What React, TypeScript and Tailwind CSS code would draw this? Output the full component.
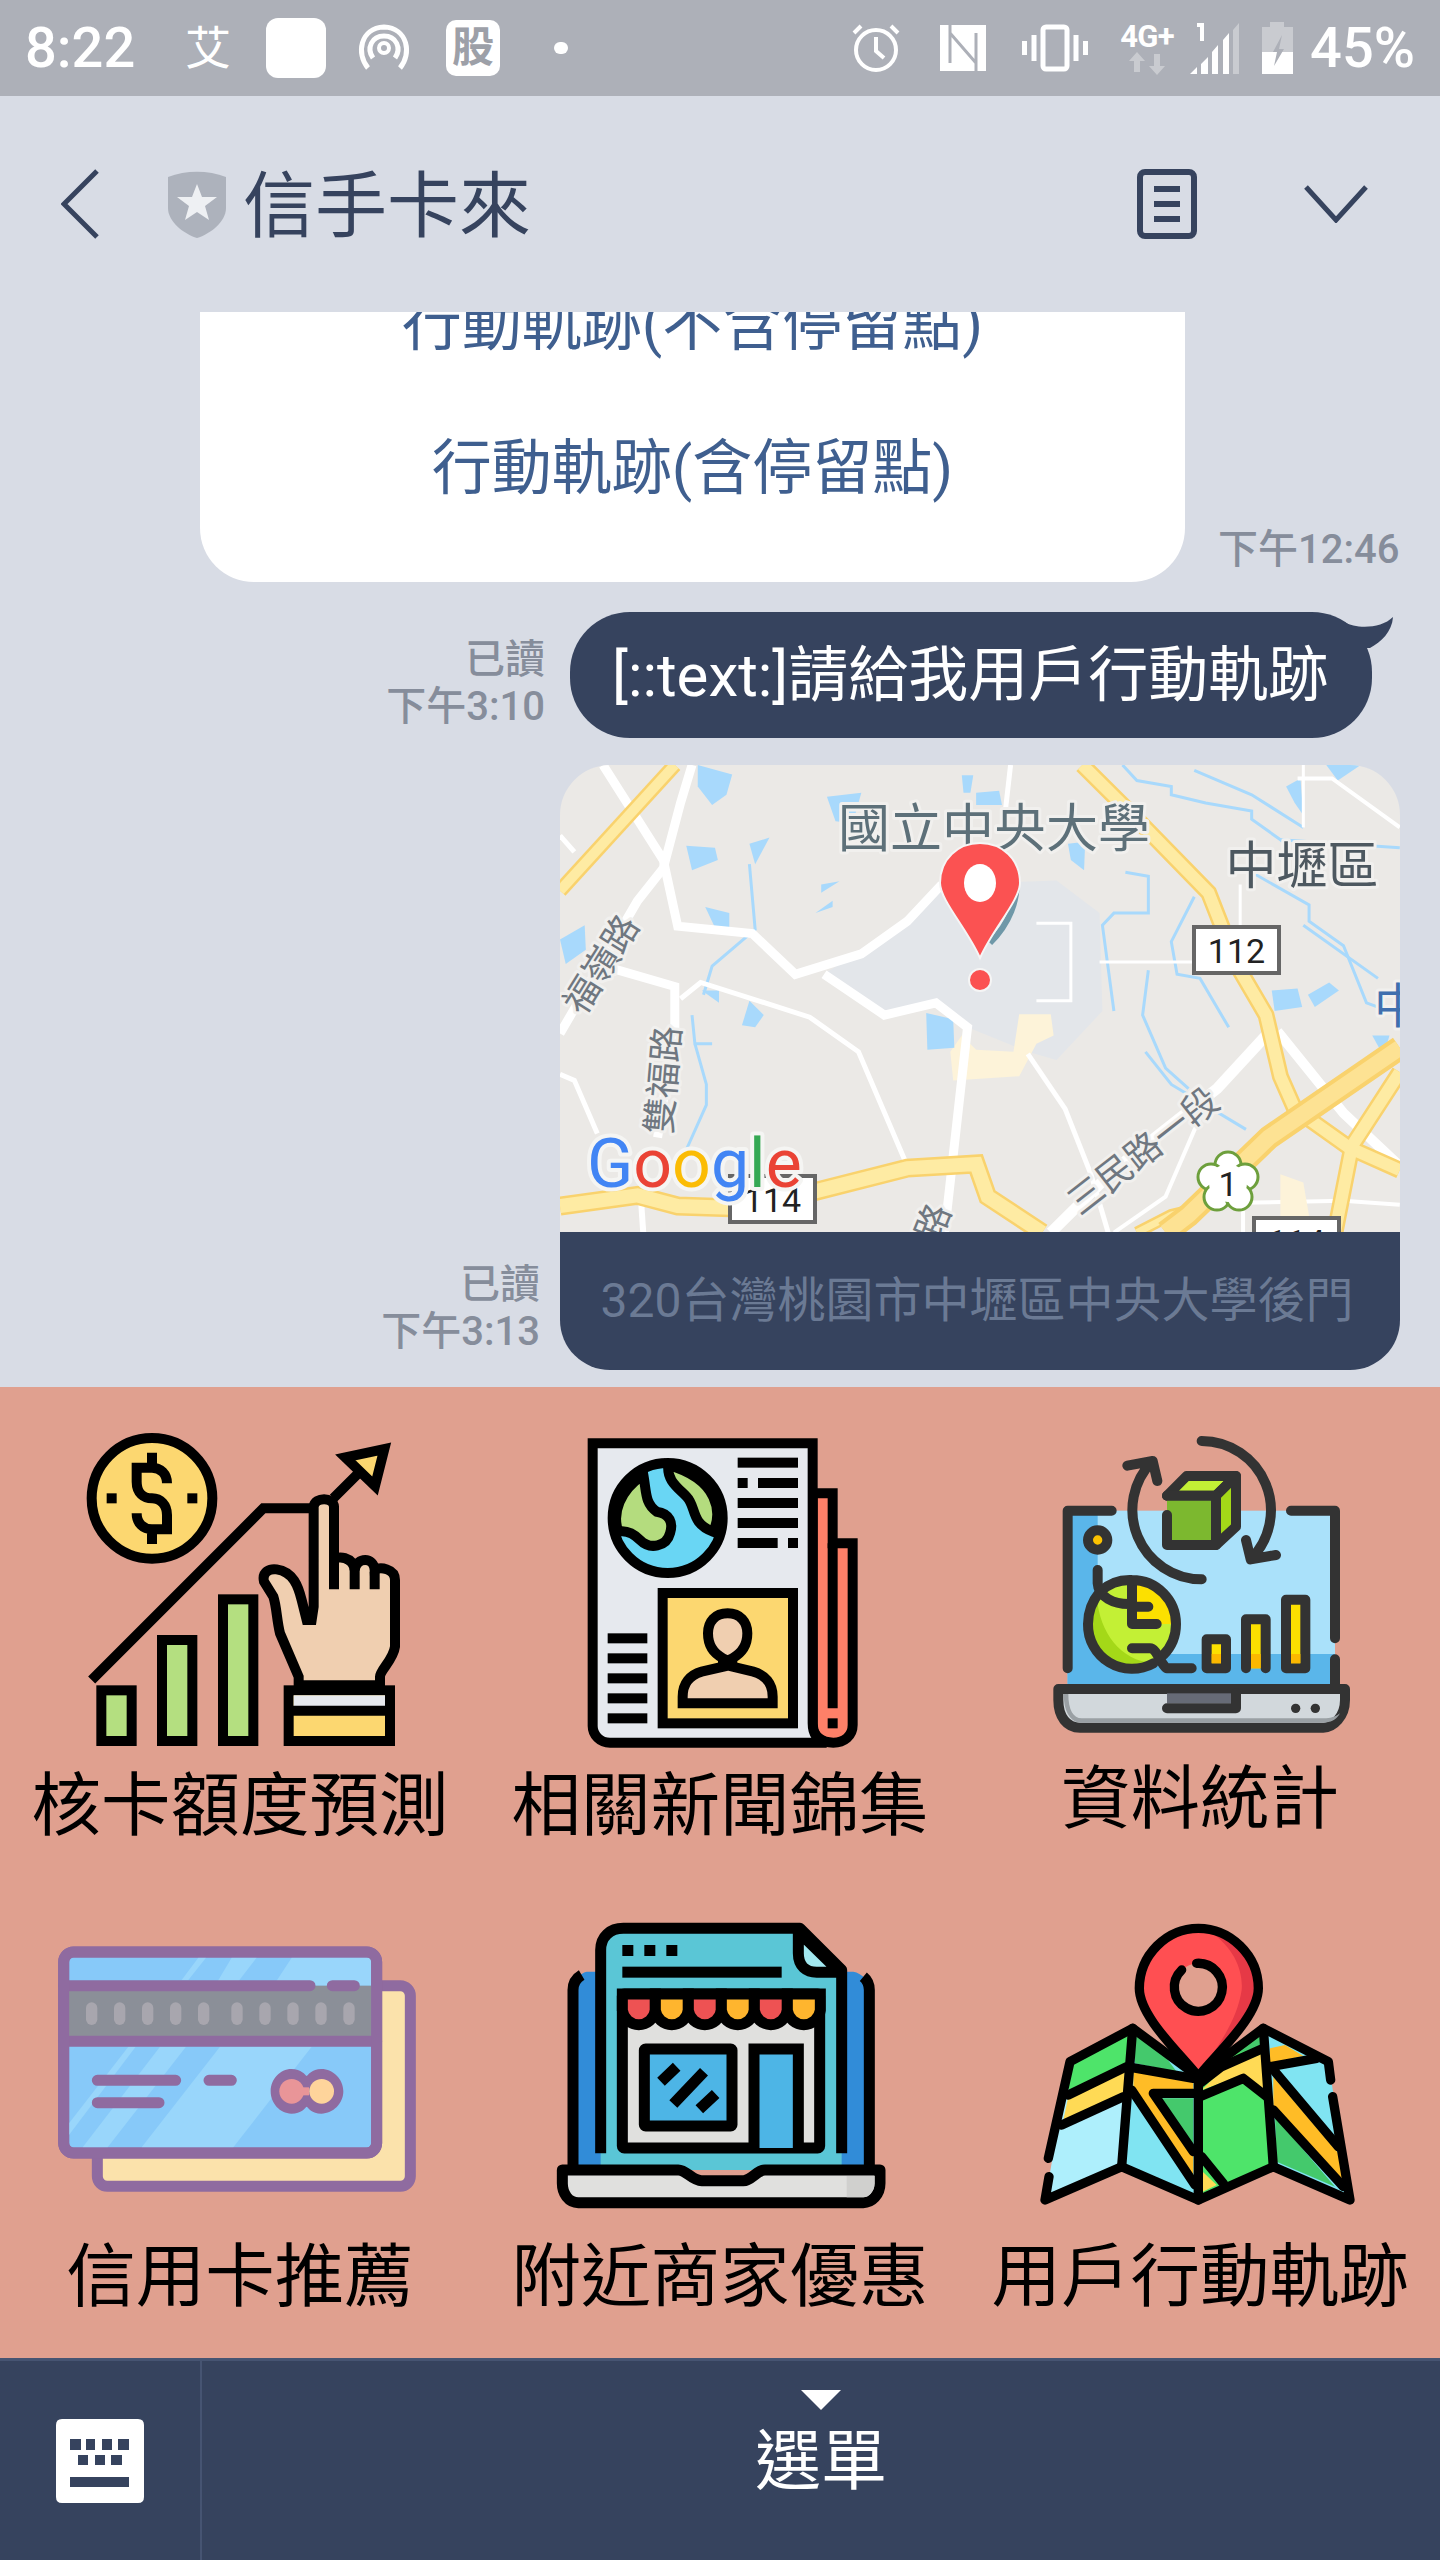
import React from 'react';

const navy = '#36435e';

// ---- map data, drawn in the stretched coordinates of the crop ----
const yellowRoads: [string, number][] = [
  ['M35 345 L235 37', 11],
  ['M945 37 L1040 170 L1165 350 L1215 530 L1265 650 L1290 800 L1315 880 L1410 975 L1498 1030', 13],
  ['M1498 790 L1415 970 L1385 1183', 13],
  ['M35 1118 L170 1092 L240 1118 L330 1122 L480 1082 L640 1025 L760 1015 L780 1095 L875 1183', 15],
  ['M1040 1183 L1100 1140 L1130 1130', 8],
];
const whiteRoads: [string, number][] = [
  ['M110 37 L215 270 L240 432 L370 450 L445 550 L560 500 L640 420 L700 330', 9],
  ['M265 37 L245 130 L215 290 L170 370 L35 695', 9],
  ['M100 525 L235 580 L235 680 L205 950', 9],
  ['M35 795 L60 810 L100 940', 5],
  ['M245 610 L280 570 L470 655 L555 740 L640 1020', 5],
  ['M495 550 L600 650 L690 620 L745 680 L705 1183', 9],
  ['M820 37 L810 160', 5],
  ['M850 745 L915 880 L960 1040 L990 1183', 5],
  ['M890 1183 L1000 1030 L1180 830 L1265 700', 11],
  ['M1285 690 L1400 890 L1498 1020', 10],
  ['M1000 1183 L1090 1095 L1150 900', 4],
  ['M865 425 L925 425 L925 615 L865 615', 3],
  ['M975 520 L1140 520', 3],
  ['M1220 330 L1220 440', 3],
  ['M1330 37 L1330 190', 3],
  ['M1320 70 L1380 70 L1498 190', 4],
  ['M1225 1183 L1225 1110 L1400 1105 L1498 1115', 4],
  ['M175 1080 L180 1183', 6],
  ['M35 210 L60 250', 5],
];
const waterLines = [
  'M1015 37 L1040 75 L1100 90 L1100 110 L1160 130 L1240 150 L1240 170 L1300 230',
  'M1140 50 L1240 110 L1330 190',
  'M1240 300 L1340 380 L1340 420 L1400 480 L1440 620 L1498 650',
  'M1330 430 L1460 560',
  'M1020 300 L1060 310 L1060 400 L1000 400 L980 430 L1000 640',
  'M1140 360 L1100 470 L1110 550 L1150 560 L1200 680',
  'M1060 540 L1050 650 L1090 780 L1130 830',
  'M1055 740 L1100 820 L1230 930',
  'M365 280 L375 440 L300 530 L285 600',
  'M265 650 L270 720 L300 720 M270 720 L290 820 L290 870 L255 980',
  'M1290 220 L1498 240',
];
const waterBlobs = [
  'M275 37 L335 60 L325 110 L300 135 L275 90 Z',
  'M255 235 L305 240 L310 270 L265 295 Z',
  'M365 230 L400 215 L375 280 Z',
  'M35 465 L78 430 L80 490 L45 525 Z',
  'M288 385 L330 400 L330 435 L305 435 Z',
  'M490 330 L522 322 L490 350 Z',
  'M480 400 L510 370 L510 385 Z',
  'M282 590 L312 590 L312 620 Z',
  'M365 615 L390 650 L375 680 L352 675 Z',
  'M673 645 L720 660 L722 730 L675 735 Z',
  'M920 230 L950 225 L948 295 L925 270 Z',
  'M1275 590 L1320 585 L1328 630 L1280 640 Z',
  'M1338 600 L1375 570 L1392 590 L1350 630 Z',
  'M735 62 L755 62 L750 105 L738 105 Z',
  'M500 115 L560 105 L545 180 L515 175 Z',
  'M760 105 L800 100 L805 135 L760 135 Z',
  'M1300 90 L1325 70 L1330 160 L1315 130 Z',
  'M1370 37 L1430 37 L1390 75 Z',
  'M1450 700 L1480 700 L1470 750 Z',
];

function MapLabel({ x, y, size, rotate, fill, children }: { x: number; y: number; size: number; rotate?: number; fill: string; children: React.ReactNode }) {
  return (
    <text x={x} y={y} fontSize={size} fill={fill} stroke="#f1f0ee" strokeWidth={6} strokeLinejoin="round" textAnchor="middle" transform={rotate ? `rotate(${rotate} ${x} ${y})` : undefined} style={{ paintOrder: 'stroke' }}>
      {children}
    </text>
  );
}

function RoadShield({ x, y, label }: { x: number; y: number; label: string }) {
  return (
    <g>
      <rect x={x} y={y} width={85} height={46} fill="#fff" stroke="#666" strokeWidth={4} />
      <text x={x + 42.5} y={y + 36} fontSize={34} fill="#222" textAnchor="middle" fontFamily="Roboto">{label}</text>
    </g>
  );
}

function MapPicture() {
  return (
    <svg width="840" height="467" viewBox="0 0 840 467" className="block">
      <rect width="840" height="467" fill="#ebe9e6" />
      <g transform="translate(-20.09 -15.1) scale(.574 .408)" fill="none">
        <path d="M500 545 L640 420 L700 330 L900 320 L975 400 L980 640 L900 760 L850 740 L745 680 L690 620 L600 650 Z" fill="#e3e6ea" />
        <path d="M835 648 L890 648 L895 700 L865 720 L835 800 L720 810 L715 740 L735 700 L760 735 L825 740 Z" fill="#fdf3d9" />
        {waterBlobs.map((d) => <path key={d} d={d} fill="#a8d9fc" />)}
        {waterLines.map((d) => <path key={d} d={d} stroke="#a8d9fc" strokeWidth={3} vectorEffect="non-scaling-stroke" />)}
        {whiteRoads.map(([d, w]) => <path key={d} d={d} stroke="#fff" strokeWidth={w} vectorEffect="non-scaling-stroke" />)}
        {yellowRoads.map(([d, w]) => <path key={d} d={d} stroke="#f9d26d" strokeWidth={w + 4} vectorEffect="non-scaling-stroke" />)}
        {yellowRoads.map(([d, w]) => <path key={d + 'i'} d={d} stroke="#feeba3" strokeWidth={w - 1} vectorEffect="non-scaling-stroke" />)}
        <path d="M1498 730 L1270 950 L1130 1140 L1090 1183" stroke="#f9d26d" strokeWidth={24} vectorEffect="non-scaling-stroke" />
        <path d="M1498 730 L1270 950 L1130 1140 L1090 1183" stroke="#fde293" strokeWidth={16} vectorEffect="non-scaling-stroke" />
        <path d="M1290 1183 L1290 1040 L1330 1060 L1345 1183 Z" fill="#fdf3d9" />
      </g>

      <MapLabel x={434} y={82} size={52} fill="#5d7079">國立中央大學</MapLabel>
      <MapLabel x={742} y={119} size={51} fill="#4d5860">中壢區</MapLabel>
      <MapLabel x={52} y={206} size={36} rotate={-58} fill="#6f7780">福嶺路</MapLabel>
      <MapLabel x={116} y={316} size={36} rotate={-85} fill="#6f7780">雙福路</MapLabel>
      <MapLabel x={591} y={396} size={36} rotate={-38} fill="#6f7780">三民路一段</MapLabel>
      <MapLabel x={385} y={462} size={36} rotate={-68} fill="#6f7780">路</MapLabel>
      <MapLabel x={838} y={258} size={48} fill="#3f6fae">中</MapLabel>

      <RoadShield x={634} y={162} label="112" />
      <RoadShield x={170} y={411} label="114" />
      <RoadShield x={694} y={453} label="114" />

      <text x={27} y={422} fontSize={68} fontFamily="Roboto" stroke="#f5f5f3" strokeWidth={8} strokeLinejoin="round" style={{ paintOrder: 'stroke' }}>
        <tspan fill="#4285f4">G</tspan>
        <tspan fill="#ea4335">o</tspan>
        <tspan fill="#fbbc05">o</tspan>
        <tspan fill="#4285f4">g</tspan>
        <tspan fill="#34a853">l</tspan>
        <tspan fill="#ea4335">e</tspan>
      </text>

      {/* flower route marker */}
      <g fill="#fff" stroke="#6d9f3c" strokeWidth={3}>
        <circle cx={668} cy={400} r={13} />
        <circle cx={651} cy={412} r={13} />
        <circle cx={685} cy={412} r={13} />
        <circle cx={657} cy={432} r={13} />
        <circle cx={679} cy={432} r={13} />
      </g>
      <circle cx={668} cy={418} r={19} fill="#fff" />
      <text x={668} y={431} fontSize={34} fill="#222" textAnchor="middle" fontFamily="Roboto">1</text>

      {/* pin */}
      <path d="M456 108 C460 135 448 160 430 178" fill="none" stroke="#6f98a8" strokeWidth={6} />
      <path d="M420 193 C408 165 380 135 380 118 C380 94 398 78 420 78 C442 78 460 94 460 118 C460 135 432 165 420 193 Z" fill="#fb5252" stroke="#f5f5f5" strokeWidth={2} />
      <ellipse cx={420} cy={118} rx={16} ry={19} fill="#fff" />
      <circle cx={420} cy={215} r={11} fill="#fb5252" stroke="#f5f5f5" strokeWidth={2} />
    </svg>
  );
}

// ---- rich menu drawings, in 3x crop coordinates ----
function IconLimit() {
  return (
    <svg width="480" height="350" viewBox="0 0 1440 1050" className="block" fill="none" stroke="#000" strokeWidth="30">
      <circle cx="456" cy="295" r="181" fill="#fcd770" />
      <path d="M501 250 C501 222 482 203 456 203 H410 V245 C410 280 432 295 456 295 C482 295 501 315 501 345 V388 H456 C430 388 410 370 410 340 M456 158 V203 M456 388 V432" />
      <rect x="320" y="280" width="30" height="30" fill="#000" stroke="none" />
      <rect x="562" y="280" width="30" height="30" fill="#000" stroke="none" />
      <path d="M275 840 L790 325 H945 M1000 295 L1085 210" />
      <path d="M1036 172 L1153 147 L1125 258 Z" fill="#fcd770" />
      <rect x="304" y="871" width="91" height="152" fill="#b4df80" />
      <rect x="486" y="720" width="91" height="303" fill="#b4df80" />
      <rect x="669" y="598" width="91" height="425" fill="#b4df80" />
      <path d="M896 856 V830 L840 700 C830 660 830 620 820 590 L792 545 C785 515 810 505 830 508 C880 515 895 560 905 600 L920 660 H935 L941 620 V320 C945 290 1000 290 1002 320 V480 C1010 465 1060 470 1064 510 C1070 470 1122 470 1124 510 C1140 500 1185 505 1185 540 V740 C1180 780 1140 810 1140 830 V856 Z" fill="#f0cfb0" />
      <path d="M1002 480 V568 M1064 505 V568 M1124 515 V568" />
      <rect x="866" y="871" width="304" height="152" fill="#fcd770" />
      <rect x="881" y="886" width="274" height="32" fill="#e6e9ee" stroke="none" />
      <path d="M866 932 H1170" />
    </svg>
  );
}

function IconNews() {
  return (
    <svg width="480" height="350" viewBox="0 0 1440 1050" className="block" fill="none" stroke="#000" strokeWidth="30">
      <path d="M998 280 H1058 V430 H1118 V975 C1118 1008 1092 1028 1060 1028 C1025 1028 998 1008 998 975 Z" fill="#fe8068" />
      <path d="M1058 430 V925" />
      <rect x="1043" y="955" width="30" height="30" fill="#000" stroke="none" />
      <path d="M338 130 H998 V970 C998 1000 1010 1020 1040 1028 H390 C360 1028 338 1005 338 978 Z" fill="#e6e9ee" />
      <circle cx="563" cy="354" r="165" fill="#69d6f4" />
      <path d="M490 225 C500 280 495 310 530 335 C570 340 580 370 570 400 C560 440 510 450 480 420 C460 400 440 390 415 395 C395 340 420 270 490 225 Z" fill="#b4dc7e" />
      <path d="M565 195 C560 240 590 260 620 290 C650 320 630 370 700 395 C725 340 720 240 565 195 Z" fill="#b4dc7e" />
      <g fill="#000" stroke="none">
        <rect x="773" y="173" width="181" height="30" />
        <rect x="773" y="234" width="30" height="30" />
        <rect x="834" y="234" width="120" height="30" />
        <rect x="773" y="294" width="181" height="30" />
        <rect x="773" y="354" width="181" height="30" />
        <rect x="773" y="414" width="120" height="30" />
        <rect x="924" y="414" width="30" height="30" />
        <rect x="383" y="700" width="119" height="30" />
        <rect x="383" y="760" width="119" height="30" />
        <rect x="383" y="820" width="119" height="30" />
        <rect x="383" y="880" width="119" height="30" />
        <rect x="383" y="940" width="119" height="30" />
      </g>
      <rect x="548" y="579" width="391" height="391" fill="#fcd770" />
      <path d="M608 910 V890 C608 850 630 825 665 815 L729 800 V775 C700 760 684 735 684 700 C684 665 705 640 743 640 C780 640 802 665 802 700 C802 735 785 760 757 775 V800 L820 815 C855 825 878 850 878 890 V910 Z" fill="#f0cfb0" />
    </svg>
  );
}

function IconStats() {
  return (
    <svg width="480" height="350" viewBox="0 0 1440 1050" className="block" fill="none" stroke="#333" strokeWidth="30" strokeLinecap="round" strokeLinejoin="round">
      <rect x="323" y="332" width="802" height="525" fill="#aae1fa" stroke="none" />
      <rect x="323" y="332" width="90" height="525" fill="#5ab6ea" stroke="none" />
      <rect x="323" y="762" width="802" height="95" fill="#5ab6ea" stroke="none" />
      <path d="M323 805 V332 H455 M993 332 H1125 V715 M1125 778 V860" />
      <path d="M295 867 H1155 V900 C1155 950 1120 983 1090 983 H360 C320 983 295 950 295 900 Z" fill="#d2d8dc" />
      <path d="M312 900 C315 945 340 968 360 968 H1090 C1110 968 1130 960 1140 940 C1120 955 1100 955 1090 955 H365 C340 955 325 930 325 882 H312 Z" fill="#9aa0a4" stroke="none" />
      <rect x="621" y="880" width="192" height="30" fill="#676b76" stroke="none" />
      <path d="M621 925 H828 V880" />
      <circle cx="1007" cy="925" r="14" fill="#333" stroke="none" />
      <circle cx="1066" cy="925" r="14" fill="#333" stroke="none" />
      <circle cx="413" cy="420" r="29" fill="#fcc200" />
      <path d="M725 123 A208 208 0 0 1 872 478 M858 420 L872 478 L948 465" />
      <path d="M725 538 A208 208 0 0 1 578 183 M502 197 L578 183 L592 243" />
      <path d="M621 287 L680 228 H828 L768 287 Z" fill="#c3f035" />
      <path d="M768 287 L828 228 V380 L768 435 Z" fill="#a4d818" />
      <path d="M621 345 V435 H768 V287 H621" fill="#7cb82f" />
      <circle cx="516" cy="672" r="132" fill="#c3f035" stroke="none" />
      <path d="M516 540 A132 132 0 0 1 648 672 H516 Z" fill="#fce000" stroke="none" />
      <path d="M410 590 A132 132 0 0 0 580 790 C480 780 420 700 410 590 Z" fill="#a4d818" stroke="none" />
      <path d="M413 510 V550 C415 590 460 615 516 612 M516 550 V672 H590 M530 620 H565 M516 745 H570 C590 745 600 790 620 805 H695" />
      <path d="M420 575 A132 132 0 0 1 516 540 C590 540 648 600 648 672 C648 710 635 740 610 765 M580 790 A132 132 0 0 1 384 672 C384 640 395 605 420 575" />
      <path d="M740 805 V718 H798 V805 Z" fill="#fce000" />
      <path d="M858 805 V658 H917 V805" fill="#fce000" />
      <path d="M978 805 V599 H1036 V805 Z" fill="#fce000" />
      <rect x="755" y="762" width="28" height="28" fill="#fcb800" stroke="none" />
      <rect x="873" y="762" width="29" height="43" fill="#fcb800" stroke="none" />
      <rect x="993" y="762" width="28" height="28" fill="#fcb800" stroke="none" />
    </svg>
  );
}

function IconCard() {
  const pills = [258, 342, 426, 510, 594, 694, 778, 862, 946, 1030];
  return (
    <svg width="480" height="320" viewBox="0 0 1440 960" className="block" fill="none" stroke="#8f6ba0" strokeWidth="33" strokeLinecap="round">
      <rect x="292" y="287" width="939" height="602" rx="30" fill="#fbe2ab" />
      <rect x="191" y="186" width="939" height="603" rx="30" fill="#87c9f9" />
      <g fill="#99d6fb" stroke="none">
        <path d="M660 470 H935 L700 772 H425 Z" />
        <path d="M480 470 H558 L323 772 H248 Z" />
        <path d="M385 470 H407 L207 735 V700 Z" />
        <path d="M875 203 H1113 V287 H820 Z" />
        <path d="M695 203 H770 L705 287 H645 Z" />
        <path d="M595 203 H618 L565 270 H545 Z" />
      </g>
      <rect x="207" y="287" width="907" height="167" fill="#8b8f98" stroke="none" />
      {pills.map((x) => <rect key={x} x={x} y="337" width="34" height="68" rx="17" fill="#a8a6ae" stroke="none" />)}
      <path d="M191 287 H930 M997 287 H1063 M191 454 H1130 M292 571 H527 M627 571 H694 M292 638 H477" />
      <rect x="191" y="186" width="939" height="603" rx="30" />
      <path d="M874 537 C905 537 915 555 920 558 C925 555 935 537 964 537 C1000 537 1030 568 1030 604 C1030 640 1000 671 964 671 C935 671 925 653 920 650 C915 653 905 671 874 671 C840 671 812 640 812 604 C812 568 840 537 874 537 Z" fill="#8f6ba0" stroke="none" />
      <circle cx="875" cy="604" r="37" fill="#e99598" stroke="none" />
      <circle cx="965" cy="604" r="37" fill="#fed49b" stroke="none" />
      <rect x="905" y="592" width="22" height="24" fill="#e99598" stroke="none" />
    </svg>
  );
}

function IconShop() {
  const awnings = [
    [367, '#ee5253'], [466, '#ffb52e'], [565, '#ee5253'], [664, '#ffb52e'], [763, '#ee5253'], [862, '#ffb52e'],
  ] as const;
  return (
    <svg width="480" height="320" viewBox="-60 0 1440 960" className="block" fill="none" stroke="#000" strokeWidth="33">
      <path d="M219 840 V300 C219 270 240 250 260 245 H1060 C1085 250 1108 270 1108 300 V840 Z" fill="#318cd8" stroke="none" />
      <path d="M219 830 V300 C219 280 228 265 245 255 M1108 830 V300 C1108 285 1102 270 1090 260" />
      <path d="M302 840 V180 C302 140 330 115 370 115 H900 L1025 240 V840 Z" fill="#5ac6d6" stroke="none" />
      <path d="M302 790 V180 C302 140 330 115 370 115 H900 L1025 240 V790" strokeLinejoin="round" />
      <path d="M895 125 V190 C895 230 920 247 950 247 H1020 Z" fill="#a2e8f0" strokeLinejoin="round" />
      <g fill="#000" stroke="none">
        <rect x="367" y="165" width="33" height="33" />
        <rect x="433" y="165" width="33" height="33" />
        <rect x="499" y="165" width="33" height="33" />
        <rect x="367" y="230" width="478" height="33" />
      </g>
      <rect x="367" y="312" width="592" height="462" rx="6" fill="#e0e0de" />
      {awnings.map(([x, c]) => (
        <path key={x} d={`M${x} 312 V361 a50 50 0 0 0 99 0 V312 Z`} fill={c} />
      ))}
      <rect x="433" y="477" width="263" height="231" rx="4" fill="#4db5e6" />
      <path d="M520 642 L612 545 M483 575 L530 530 M598 658 L647 612" />
      <path d="M762 774 V477 H895 V774" fill="#4db5e6" />
      <path d="M187 840 H535 C560 840 575 872 605 872 H730 C755 872 770 840 795 840 H1140 V880 C1140 915 1115 938 1090 938 H235 C205 938 187 910 187 880 Z" fill="#e0e0de" strokeLinejoin="round" />
      <path d="M1040 858 H1124 V880 C1124 905 1105 922 1090 922 H1040 Z" fill="#d0d0ce" stroke="none" />
    </svg>
  );
}

function IconRoute() {
  return (
    <svg width="480" height="320" viewBox="-60 0 1440 960" className="block" fill="none" stroke="#000" strokeWidth="28" strokeLinejoin="round" strokeLinecap="round">
      <g stroke="none">
        <path d="M270 515 L458 415 L425 830 L195 930 Z" fill="#aeeffc" />
        <path d="M458 415 L655 560 V930 L425 830 Z" fill="#80e4f2" />
        <path d="M655 560 L850 415 L880 830 L655 930 Z" fill="#4ee46a" />
        <path d="M850 415 L1045 515 L1110 930 L880 830 Z" fill="#80e4f2" />
        <path d="M270 515 L450 425 L440 530 L265 610 Z" fill="#4ee46a" />
        <path d="M265 620 L435 545 L430 620 L250 690 Z" fill="#ffda55" />
        <path d="M465 430 L530 465 L590 545 L465 520 Z" fill="#44c96c" />
        <path d="M460 545 L640 575 V610 L520 605 L640 800 V880 L460 600 Z" fill="#ffbc26" />
        <path d="M545 625 H640 V770 Z" fill="#44c96c" />
        <path d="M885 680 L1065 890 L890 815 Z" fill="#44c96c" />
        <path d="M880 560 L1075 790 L1092 885 L880 650 Z" fill="#ffbc26" />
        <path d="M665 600 L725 540 L850 490 V600 L790 555 Z" fill="#ffda55" />
        <path d="M870 475 L915 465 L970 498 L870 520 Z" fill="#ffbc26" />
        <path d="M668 845 L710 885 L668 905 Z" fill="#ffda55" />
        <path d="M775 490 L840 440 L845 465 Z" fill="#44c96c" />
      </g>
      <path d="M205 805 L270 515 L458 415 L655 560 L850 415 L1045 515 L1052 570 M1058 620 L1110 930 L880 830 L655 930 L425 830 L195 930 L207 860" />
      <path d="M458 415 L425 830 M655 580 V930 M850 415 L880 830" />
      <path d="M265 615 L440 530 L640 565 M245 705 L430 620 M455 600 L645 885 M520 610 H640 M520 610 L640 785 M660 620 L790 565 L860 620 M665 800 L730 880 M660 580 L725 530 L850 475 M870 530 L1010 505 M885 545 L1075 770 M880 660 L1090 890" />
      <path d="M655 560 C600 490 478 380 478 295 C478 195 560 115 655 115 C750 115 835 195 835 295 C835 380 710 490 655 560 Z" fill="#ff4f52" stroke="none" />
      <path d="M690 125 C760 170 790 240 785 300 C770 400 700 490 650 558 C720 490 835 380 835 295 C835 200 760 125 690 125 Z" fill="#e63946" stroke="none" />
      <path d="M655 560 C600 490 478 380 478 295 C478 195 560 115 655 115 C750 115 835 195 835 295 C835 380 710 490 655 560 Z" />
      <circle cx="655" cy="292" r="72" fill="#e0a08f" stroke="none" />
      <path d="M650 220 A72 72 0 1 1 605 240" />
    </svg>
  );
}

const row1 = [
  { label: '核卡額度預測', icon: <IconLimit />, gap: 'mt-[17px]' },
  { label: '相關新聞錦集', icon: <IconNews />, gap: 'mt-[17px]' },
  { label: '資料統計', icon: <IconStats />, gap: 'mt-[10px]' },
];
const row2 = [
  { label: '信用卡推薦', icon: <IconCard /> },
  { label: '附近商家優惠', icon: <IconShop /> },
  { label: '用戶行動軌跡', icon: <IconRoute /> },
];

function ReadMark({ read, time }: { read?: boolean; time: string }) {
  return (
    <div className="flex flex-col items-end text-[40px] leading-[47px] font-medium text-[#868d9b]">
      {read && <span>已讀</span>}
      <span>{time}</span>
    </div>
  );
}

function StatusBar() {
  return (
    <div className="h-[96px] bg-[#adb0b8] flex items-center pl-[25px] pr-[25px] text-white">
      <span className="text-[56px] leading-none font-medium w-[108px]">8:22</span>
      <span className="ml-[52px] text-[46px] leading-none">艾</span>
      <div className="ml-[35px] w-[60px] h-[60px] rounded-[12px] bg-white" />
      <svg width="52" height="48" viewBox="0 0 52 48" className="ml-[32px]" fill="none" stroke="#fff" strokeWidth="5">
        <path d="M10 44 C-2 30 2 4 26 3 C50 4 54 30 42 44" />
        <path d="M15 34 C8 24 14 12 26 12 C38 12 44 24 37 34" />
        <circle cx="26" cy="24" r="5" strokeWidth="4" />
      </svg>
      <div className="ml-[36px] w-[54px] h-[56px] rounded-[10px] bg-white text-[#9da0a8] text-[42px] leading-[56px] font-bold text-center">股</div>
      <div className="ml-[54px] w-[14px] h-[12px] rounded-full bg-white" />
      <div className="flex-1" />
      <svg width="50" height="50" viewBox="0 0 50 50" fill="none" stroke="#fff" strokeWidth="4">
        <circle cx="25" cy="27" r="20" />
        <path d="M25 14 V28 L33 35 M3 10 L10 3 M47 10 L40 3" />
      </svg>
      <svg width="46" height="46" viewBox="0 0 46 46" className="ml-[39px]">
        <rect width="46" height="46" fill="#fff" />
        <path d="M10 0 V38 M36 46 V8 M10 8 L36 38" fill="none" stroke="#adb0b8" strokeWidth="3" />
      </svg>
      <svg width="66" height="48" viewBox="0 0 66 48" className="ml-[36px]" fill="none" stroke="#fff">
        <rect x="21" y="3" width="24" height="42" rx="3" strokeWidth="5" />
        <path d="M12 11 V37 M54 11 V37" strokeWidth="5" />
        <path d="M2.5 17 V31 M63.5 17 V31" strokeWidth="5" />
      </svg>
      <div className="ml-[29px] w-[60px] h-[54px] flex flex-col items-center">
        <span className="text-[31px] leading-[31px] font-bold tracking-tight">4G+</span>
        <svg width="44" height="23" viewBox="0 0 44 23" fill="#c9cbd0">
          <path d="M12 0 L20 9 H15 V20 H9 V9 H4 Z M32 23 L24 14 H29 V2 H35 V14 H40 Z" />
        </svg>
      </div>
      <svg width="50" height="52" viewBox="0 0 50 52" className="ml-[13px]">
        <path d="M0 52 L7 45 V52 Z M11 52 V42 L18 35 V52 Z M22 52 V30 L28 23 V52 Z M33 52 V18 L39 11 V52 Z" fill="#fff" />
        <path d="M43 52 V8 L49 1 V52 Z" fill="#c9cbd0" />
        <path d="M7 1 H14 V19 H10 V5 H7 Z" fill="#fff" />
      </svg>
      <svg width="31" height="52" viewBox="0 0 31 52" className="ml-[22px]">
        <path d="M8 0 H22 V5 H31 V30 H0 V5 H8 Z" fill="#c9cbd0" />
        <path d="M0 30 H31 V52 H0 Z" fill="#fff" />
        <path d="M20 13 L11 30 H15 L12 44 L22 27 H17 Z" fill="#adb0b8" />
      </svg>
      <span className="ml-[17px] text-[56px] leading-none font-medium">45%</span>
    </div>
  );
}

function Header() {
  return (
    <div className="h-[216px] bg-[#d8dce5] flex items-center pl-[61px] pr-[72px]">
      <svg width="38" height="70" viewBox="0 0 38 70" fill="none" stroke={navy} strokeWidth="5">
        <path d="M36 2 L3 35 L36 68" />
      </svg>
      <svg width="58" height="68" viewBox="0 0 58 68" className="ml-[69px]">
        <path d="M0 7 C18 0 40 0 58 7 V38 C58 52 42 64 29 68 C16 64 0 52 0 38 Z" fill="#adb2bc" />
        <path d="M29 14 L34 27 H49 L37 36 L41 50 L29 42 L17 50 L21 36 L9 27 H24 Z" fill="#eef0f3" />
      </svg>
      <span className="ml-[17px] mt-[6px] text-[72px] leading-none text-[#36435e]">信手卡來</span>
      <div className="flex-1" />
      <svg width="60" height="70" viewBox="0 0 60 70" fill="none" stroke={navy}>
        <rect x="3" y="3" width="54" height="64" rx="5" strokeWidth="6" />
        <path d="M17 20 H43 M17 35 H43 M17 50 H43" strokeWidth="6" />
      </svg>
      <svg width="64" height="38" viewBox="0 0 64 38" className="ml-[107px]" fill="none" stroke={navy} strokeWidth="5">
        <path d="M2 2 L32 35 L62 2" />
      </svg>
    </div>
  );
}

function Chat() {
  return (
    <div className="h-[1075px] bg-[#d8dce5] overflow-hidden flex flex-col">
      <div className="flex items-end pl-[200px]">
        <div className="w-[985px] h-[270px] bg-white rounded-b-[54px] overflow-hidden flex flex-col items-center text-[60px] leading-[64px] text-[#3f5f8f]">
          <span className="-mt-[19px] whitespace-nowrap">行動軌跡(不含停留點)</span>
          <span className="mt-[80px] whitespace-nowrap">行動軌跡(含停留點)</span>
        </div>
        <div className="ml-[33px] text-[40px] leading-[48px] font-medium text-[#868d9b] pb-[8px]">下午12:46</div>
      </div>
      <div className="mt-[30px] flex items-end justify-end pr-[68px]">
        <div className="mb-[8px]"><ReadMark read time="下午3:10" /></div>
        <div className="relative ml-[25px] w-[802px] h-[126px] rounded-[60px] bg-[#36435e] flex items-center pl-[42px] pt-[2px] text-[60px] text-white">
          <span className="whitespace-nowrap">[::text:]請給我用戶行動軌跡</span>
          <svg width="60" height="44" viewBox="0 0 60 44" className="absolute right-[-24px] top-0" fill={navy}>
            <path d="M8 10 C20 17 45 17 57 5 C56 20 45 30 34 36 L8 36 Z" />
          </svg>
        </div>
      </div>
      <div className="mt-[27px] flex items-end justify-end pr-[40px]">
        <div className="mb-[15px]"><ReadMark read time="下午3:13" /></div>
        <div className="ml-[20px] w-[840px] rounded-[50px] overflow-hidden">
          <MapPicture />
          <div className="h-[138px] bg-[#36435e] flex items-center justify-center pr-[6px] text-[48px] text-[#6b7a94] whitespace-nowrap">
            320台灣桃園市中壢區中央大學後門
          </div>
        </div>
      </div>
    </div>
  );
}

function RichMenu() {
  return (
    <div className="h-[971px] bg-[#e0a08f] text-black">
      <div className="grid grid-cols-3 h-[503px]">
        {row1.map((item) => (
          <div key={item.label} className="flex flex-col items-center pt-[13px]">
            {item.icon}
            <div className={`${item.gap} text-[69.5px] leading-[80px] whitespace-nowrap`}>{item.label}</div>
          </div>
        ))}
      </div>
      <div className="grid grid-cols-3 h-[468px]">
        {row2.map((item) => (
          <div key={item.label} className="flex flex-col items-center">
            {item.icon}
            <div className="mt-[28px] text-[69.5px] leading-[80px] whitespace-nowrap">{item.label}</div>
          </div>
        ))}
      </div>
    </div>
  );
}

function BottomBar() {
  return (
    <div className="h-[202px] bg-[#36435e] border-t-[3px] border-[#465472] flex">
      <div className="w-[202px] border-r-2 border-[#465472] flex items-center justify-center">
        <svg width="88" height="84" viewBox="0 0 88 84">
          <path fillRule="evenodd" fill="#fff" d="M6 0 H82 Q88 0 88 6 V78 Q88 84 82 84 H6 Q0 84 0 78 V6 Q0 0 6 0 Z M14 20 V31 H25 V20 Z M30 20 V31 H39 V20 Z M46 20 V31 H56 V20 Z M62 20 V31 H73 V20 Z M22 36 V46 H32 V36 Z M39 36 V46 H49 V36 Z M55 36 V46 H66 V36 Z M14 58 V68 H73 V58 Z" />
        </svg>
      </div>
      <div className="flex-1 flex flex-col items-center pt-[29px]">
        <div className="w-0 h-0 border-x-[20px] border-x-transparent border-t-[20px] border-t-white" />
        <span className="mt-[12px] text-[66px] leading-[80px] text-white">選單</span>
      </div>
    </div>
  );
}

export default function App() {
  return (
    <div className="w-[1440px] h-[2560px] overflow-hidden font-['Roboto','Noto_Sans_CJK_TC',sans-serif]">
      <StatusBar />
      <Header />
      <Chat />
      <RichMenu />
      <BottomBar />
    </div>
  );
}
